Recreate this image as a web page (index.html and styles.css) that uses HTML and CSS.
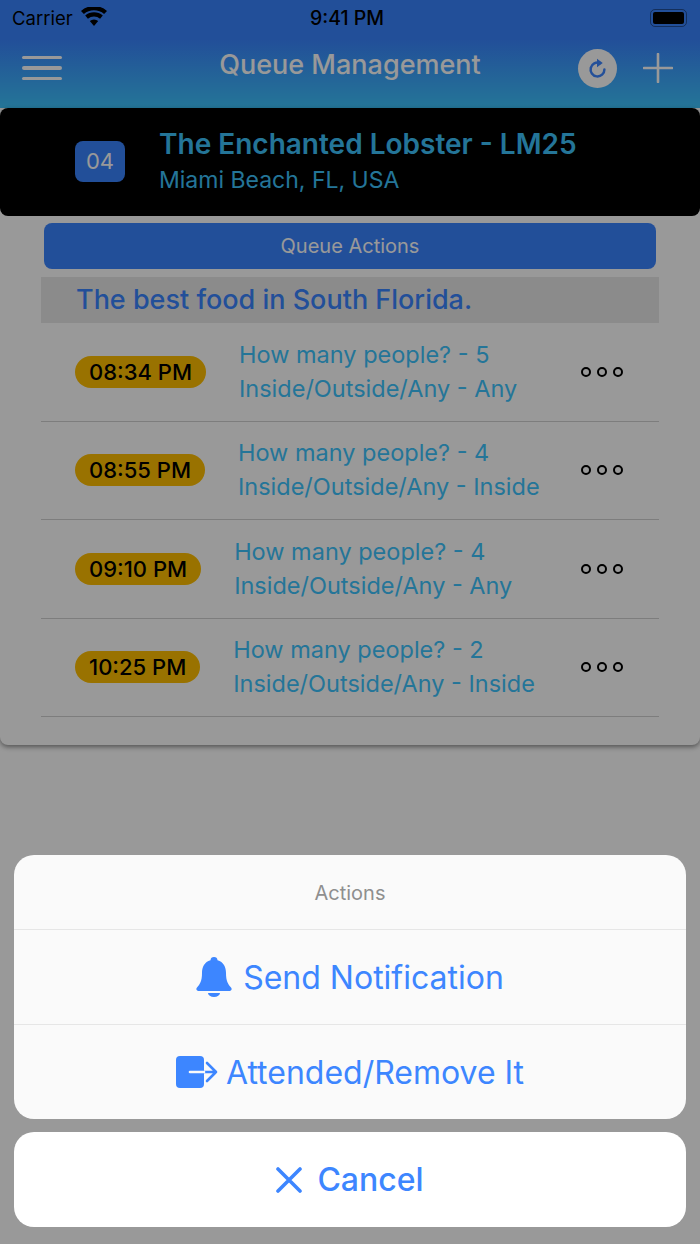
FILE: index.html
```html
<!DOCTYPE html>
<html lang="en">
  <head>
    <meta charset="UTF-8">
    <title>Queue Management</title>
    <link rel="stylesheet" href="styles.css">
  </head>
  <body>
    <div class="screen">
      <header class="topbar">
        <div class="status">
          <div class="status-left">
            <span>Carrier</span>
            <svg class="wifi" viewBox="0 0 26 19"><path d="M13 19l-4.200-5a6.300 6.300 0 0 1 8.400 0z"/><path d="M6.900 11.700L4.200 8.600a13.500 13.500 0 0 1 17.600 0l-2.700 3.100a9.300 9.300 0 0 0-12.200 0z"/><path d="M2.900 7.100L0 3.900a19.800 19.800 0 0 1 26 0l-2.900 3.200a15.500 15.500 0 0 0-20.200 0z"/></svg>
          </div>
          <span class="clock">9:41 PM</span>
          <div class="battery"><div class="battery-fill"></div></div>
        </div>
        <nav class="navbar">
          <div class="burger"><span></span><span></span><span></span></div>
          <h1>Queue Management</h1>
          <div class="nav-icons">
            <div class="refresh">
              <svg viewBox="0 0 24 24"><path d="M14.500 6.300a7.200 7.200 0 1 0 4.700 6.700" fill="none" stroke="#3d86ff" stroke-width="2.600" stroke-linecap="round"/><path d="M11.500 1.800l6 4.400-6 4.400z" fill="#3d86ff"/></svg>
            </div>
            <svg class="plus" viewBox="0 0 30 30"><path d="M15 1v28M1 15h28" stroke="#fff" stroke-width="2.600" stroke-linecap="round"/></svg>
          </div>
        </nav>
      </header>

      <main class="panel">
        <section class="place">
          <div class="place-num">04</div>
          <div>
            <div class="place-name">The Enchanted Lobster - LM25</div>
            <div class="place-city">Miami Beach, FL, USA</div>
          </div>
        </section>
        <div class="panel-body">
          <button class="queue-btn">Queue Actions</button>
          <div class="tagline">The best food in South Florida.</div>
          <ul class="rows">
            <li class="row">
              <span class="time">08:34 PM</span>
              <div class="info"><div>How many people? - 5</div><div>Inside/Outside/Any - Any</div></div>
              <div class="more"><i></i><i></i><i></i></div>
            </li>
            <li class="row">
              <span class="time">08:55 PM</span>
              <div class="info"><div>How many people? - 4</div><div>Inside/Outside/Any - Inside</div></div>
              <div class="more"><i></i><i></i><i></i></div>
            </li>
            <li class="row">
              <span class="time">09:10 PM</span>
              <div class="info"><div>How many people? - 4</div><div>Inside/Outside/Any - Any</div></div>
              <div class="more"><i></i><i></i><i></i></div>
            </li>
            <li class="row">
              <span class="time">10:25 PM</span>
              <div class="info"><div>How many people? - 2</div><div>Inside/Outside/Any - Inside</div></div>
              <div class="more"><i></i><i></i><i></i></div>
            </li>
          </ul>
        </div>
      </main>

      <div class="overlay">
        <div class="sheet">
          <div class="sheet-title">Actions</div>
          <div class="sheet-item">
            <svg class="bell" viewBox="0 0 36 40"><path d="M18 0a3.500 3.500 0 0 1 3.500 3.200C27.500 4.800 30 10 30 16c0 8 2 11 5 14.500 1.300 1.500.6 3.500-1.500 3.500h-31C.4 34-.3 32 1 30.500 4 27 6 24 6 16 6 10 8.500 4.800 14.500 3.200A3.500 3.500 0 0 1 18 0z"/><path d="M12 36h12a6 4 0 0 1-12 0z"/></svg>
            <span>Send Notification</span>
          </div>
          <div class="sheet-item">
            <svg class="leave" viewBox="0 0 42 32"><rect x="0" y="0" width="28" height="32" rx="4"/><path d="M14 16h26M31 7l9 9-9 9" fill="none" stroke="#3d86ff" stroke-width="2.600" stroke-linecap="round" stroke-linejoin="round"/><path d="M14 16h14" stroke="#fafafa" stroke-width="2.600" stroke-linecap="round"/></svg>
            <span>Attended/Remove It</span>
          </div>
        </div>
        <div class="cancel">
          <svg class="cross" viewBox="0 0 26 26"><path d="M2 2l22 22M24 2L2 24" stroke="#3d86ff" stroke-width="3.600" stroke-linecap="round"/></svg>
          <span>Cancel</span>
        </div>
      </div>
    </div>
  </body>
</html>
```

FILE: styles.css
```css
* {
  box-sizing: border-box;
}

html, body {
  margin: 0;
  height: 100%;
}

body {
  font-family: Inter, "Noto Sans", sans-serif;
  background: #fff;
}

.screen {
  position: relative;
  width: 700px;
  height: 1244px;
  overflow: hidden;
  background: #fff;
}

/* top bar */
.topbar {
  height: 108px;
  background: linear-gradient(#3a84ff 0, #3a84ff 40px, #3dc4fd 108px);
  color: #fff;
}

.status {
  height: 36px;
  padding: 0 12px;
  display: flex;
  align-items: center;
  justify-content: space-between;
  color: #000;
  position: relative;
  font-size: 18.500px;
}

.status-left {
  display: flex;
  align-items: center;
  gap: 8px;
}

.wifi {
  width: 26px;
  height: 19px;
  margin-top: -4px;
  fill: #000;
}

.clock {
  position: absolute;
  left: 310px;
  font-weight: 500;
  font-size: 19.500px;
}

.battery {
  width: 37px;
  height: 18px;
  margin-right: 1px;
  padding: 2px;
  border: 1.500px solid rgba(0, 0, 0, 0.4);
  border-radius: 5px;
}

.battery-fill {
  height: 100%;
  background: #000;
  border-radius: 2px;
}

.navbar {
  height: 72px;
  padding: 0 27px 8px 22px;
  display: flex;
  align-items: center;
  justify-content: space-between;
  position: relative;
}

.navbar h1 {
  position: absolute;
  left: 0;
  right: 0;
  margin: 0;
  padding-bottom: 8px;
  text-align: center;
  font-size: 27px;
  font-weight: 500;
}

.burger {
  width: 40px;
  display: flex;
  flex-direction: column;
  gap: 7px;
}

.burger span {
  display: block;
  height: 3.500px;
  border-radius: 2px;
  background: #fff;
}

.nav-icons {
  display: flex;
  align-items: center;
  gap: 26px;
}

.refresh {
  width: 39px;
  height: 39px;
  border-radius: 50%;
  background: #fff;
  display: flex;
  align-items: center;
  justify-content: center;
}

.refresh svg {
  width: 23px;
  height: 23px;
}

.plus {
  width: 30px;
  height: 30px;
}

/* main panel */
.panel {
  height: 637px;
  border-radius: 8px;
  background: #fff;
  box-shadow: 0 2px 5px rgba(0, 0, 0, 0.45);
}

.place {
  height: 108px;
  padding: 0 75px 2px;
  display: flex;
  align-items: center;
  gap: 34px;
  background: #000;
  border-radius: 8px;
}

.place-num {
  width: 50px;
  height: 41px;
  border-radius: 8px;
  background: #3a84ff;
  color: #fff;
  font-size: 22px;
  line-height: 41px;
  text-align: center;
}

.place-name {
  color: #3dc4fd;
  font-size: 28px;
  font-weight: 600;
  line-height: 38px;
}

.place-city {
  color: #3dc4fd;
  font-size: 23px;
  line-height: 34px;
}

.panel-body {
  padding: 7px 41px 0;
}

.queue-btn {
  display: block;
  width: 612px;
  height: 46px;
  margin: 0 3px;
  padding: 0;
  border: none;
  border-radius: 8px;
  background: #3a84ff;
  color: #fff;
  font-family: inherit;
  font-size: 20px;
}

.tagline {
  height: 46px;
  margin-top: 8px;
  padding-left: 35px;
  background: #e8e8e8;
  color: #3a84ff;
  font-size: 27px;
  font-weight: 500;
  line-height: 46px;
}

.rows {
  list-style: none;
  margin: 0;
  padding: 0;
}

.row {
  height: 98.500px;
  padding: 0 36px 0 34px;
  display: flex;
  align-items: center;
  border-bottom: 1px solid #d0d0d0;
}

.time {
  height: 32px;
  padding: 0 14px;
  border-radius: 16px;
  background: #ffbf00;
  color: #000;
  font-size: 22px;
  font-weight: 500;
  line-height: 32px;
}

.info {
  margin-left: 33px;
  color: #3dc4fd;
  font-size: 23.500px;
  line-height: 34px;
}

.more {
  margin-left: auto;
  display: flex;
  gap: 6px;
}

.more i {
  width: 10px;
  height: 10px;
  border: 2.500px solid #000;
  border-radius: 50%;
}

/* action sheet */
.overlay {
  position: absolute;
  top: 0;
  left: 0;
  right: 0;
  bottom: 0;
  padding: 0 14px 17px;
  display: flex;
  flex-direction: column;
  justify-content: flex-end;
  gap: 13px;
  background: rgba(0, 0, 0, 0.4);
}

.sheet {
  background: #fafafa;
  border-radius: 20px;
}

.sheet-title {
  height: 74px;
  line-height: 76px;
  text-align: center;
  color: #8f8f8f;
  font-size: 20px;
}

.sheet-item {
  height: 95px;
  border-top: 1px solid #e6e6e6;
  display: flex;
  align-items: center;
  justify-content: center;
  gap: 11px;
  color: #3d86ff;
  font-size: 32px;
}

.bell {
  width: 36px;
  height: 40px;
  fill: #3d86ff;
}

.leave {
  width: 42px;
  height: 32px;
  fill: #3d86ff;
  margin-right: -3px;
}

.cancel {
  height: 95px;
  background: #fff;
  border-radius: 20px;
  display: flex;
  align-items: center;
  justify-content: center;
  gap: 15px;
  color: #3d86ff;
  font-size: 32px;
  font-weight: 500;
}

.cross {
  width: 26px;
  height: 26px;
}
```
